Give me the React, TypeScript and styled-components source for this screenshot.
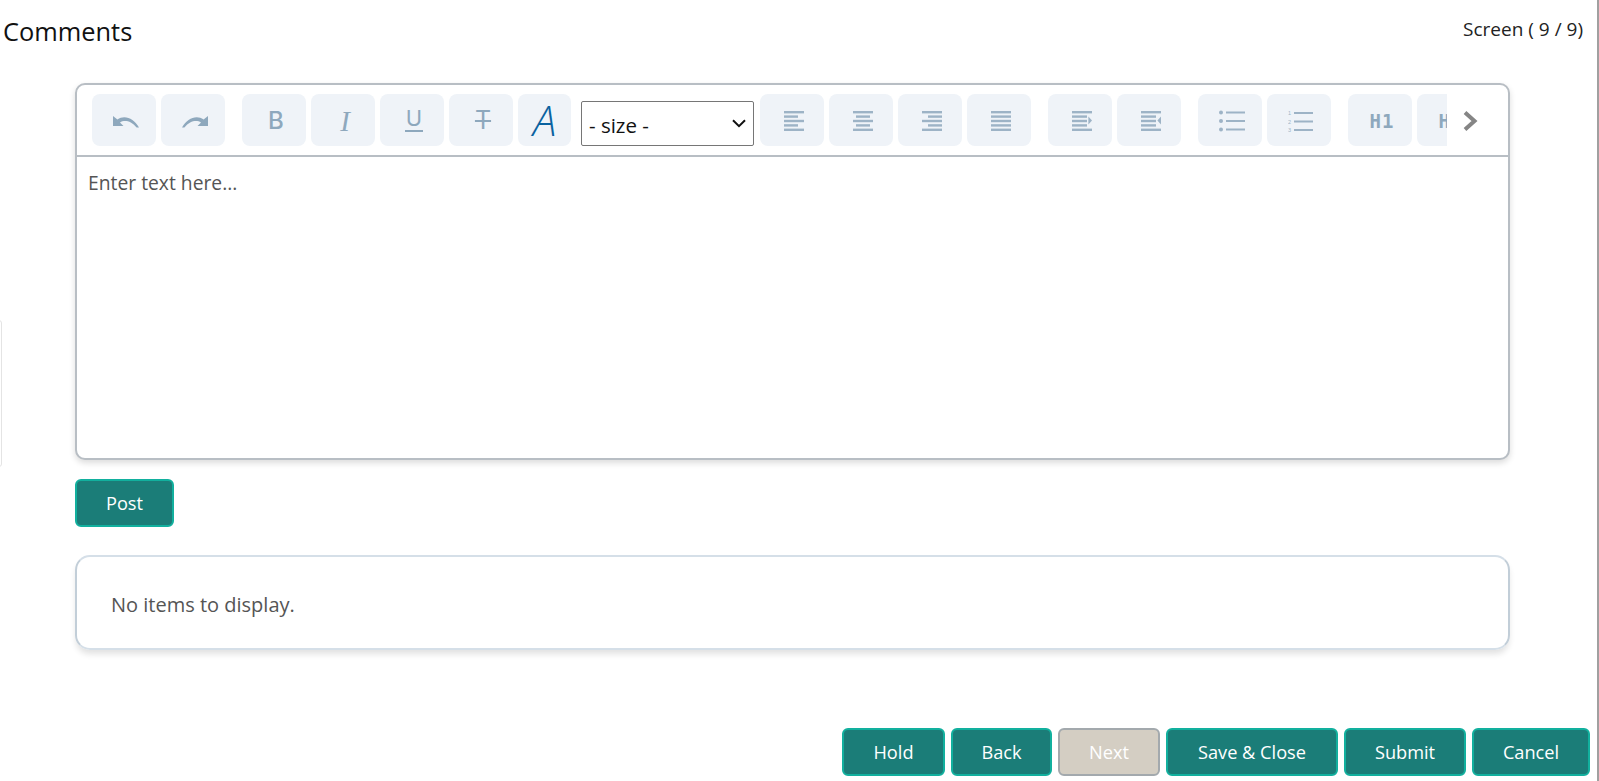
import React from 'react';
import styled, { createGlobalStyle } from 'styled-components';

const GlobalStyle = createGlobalStyle`
  html, body {
    margin: 0;
    padding: 0;
    background: #fff;
    overflow: hidden;
  }
  * { box-sizing: border-box; }
`;

const ICON = '#9db3c6';

const AlignIcon = ({ rows }: { rows: [number, number][] }) => (
  <svg width="20" height="20" viewBox="0 0 20 20">
    {rows.map(([x, w], i) => (
      <rect key={i} x={x} y={i * 4.4} width={w} height="2.4" fill={ICON} />
    ))}
  </svg>
);

const IndentIcon = ({ flip }: { flip?: boolean }) => (
  <svg width="20" height="20" viewBox="0 0 20 20">
    <rect x="0" y="0" width="20" height="2.4" fill={ICON} />
    <rect x="0" y="4.4" width="15" height="2.4" fill={ICON} />
    <rect x="0" y="8.8" width="15" height="2.4" fill={ICON} />
    <rect x="0" y="13.2" width="15" height="2.4" fill={ICON} />
    <rect x="0" y="17.6" width="20" height="2.4" fill={ICON} />
    <path d={flip ? 'M20 5.5v8l-3.6-4z' : 'M16.4 5.5v8l3.6-4z'} fill={ICON} />
  </svg>
);

const UndoIcon = ({ redo }: { redo?: boolean }) => (
  <svg width="26" height="13" viewBox="0 0 26 13" style={redo ? { transform: 'scaleX(-1)' } : undefined}>
    <path d="M0 1v10h10.5L7 7.4C11.5 4.8 18 5.6 23.6 12.6H26C21 3.5 11.5-.5 4.4 4.6z" fill="#8ea8bd" />
  </svg>
);

const BulletIcon = () => (
  <svg width="26" height="22" viewBox="0 0 26 22">
    <circle cx="2" cy="2.5" r="2" fill={ICON} />
    <circle cx="2" cy="11" r="2" fill={ICON} />
    <circle cx="2" cy="19.5" r="2" fill={ICON} />
    <rect x="7" y="1.5" width="19" height="2" fill={ICON} />
    <rect x="7" y="10" width="19" height="2" fill={ICON} />
    <rect x="7" y="18.5" width="19" height="2" fill={ICON} />
  </svg>
);

const NumberIcon = () => (
  <svg width="26" height="22" viewBox="0 0 26 22">
    {['1', '2', '3'].map((n, i) => (
      <g key={n}>
        <text x="0" y={5 + i * 8.5} fontSize="5.5" fontFamily="Liberation Sans, sans-serif" fill={ICON}>{n}</text>
        <rect x="6" y={2 + i * 8.5} width="19" height="2" fill={ICON} />
      </g>
    ))}
  </svg>
);

const Chevron = () => (
  <svg width="16" height="20" viewBox="0 0 16 20">
    <path d="M3 1.5L12.5 10 3 18.5" fill="none" stroke="#858585" strokeWidth="4" />
  </svg>
);

const selectArrow =
  "data:image/svg+xml,%3Csvg xmlns='http://www.w3.org/2000/svg' width='14' height='9' viewBox='0 0 14 9'%3E%3Cpath d='M1 1.2l6 6 6-6' fill='none' stroke='%23111' stroke-width='2'/%3E%3C/svg%3E";

const Page = styled.div`
  height: 781px;
  display: flex;
  flex-direction: column;
  border-right: 2px solid #a0a0a0;
  font-family: 'Open Sans', 'Noto Sans', sans-serif;
  position: relative;
`;

const EdgeTab = styled.div`
  position: absolute;
  left: -4px;
  top: 320px;
  width: 6px;
  height: 147px;
  border: 1px solid #e4e4e4;
  border-radius: 4px;
`;

const Header = styled.header`
  display: flex;
  justify-content: space-between;
  align-items: center;
  height: 61px;
  padding: 0 14px 0 3px;
`;

const Title = styled.h1`
  margin: 0;
  font-size: 25.4px;
  font-weight: 400;
  color: #111;
`;

const ScreenCount = styled.span`
  font-size: 19px;
  color: #222;
  margin-top: -3px;
`;

const Content = styled.main`
  display: flex;
  flex-direction: column;
  align-items: flex-start;
  padding: 22px 87px 0 75px;
`;

const Editor = styled.section`
  width: 100%;
  height: 377px;
  border: 2px solid #b8bec4;
  border-radius: 10px;
  box-shadow: 0 3px 6px rgba(0, 0, 0, 0.14);
  background: #fff;
`;

const ToolbarRow = styled.div`
  display: flex;
  align-items: center;
  height: 72px;
  border-bottom: 2px solid #b8bec4;
  padding: 0 0 1px 15px;
`;

const ToolScroller = styled.div`
  display: flex;
  align-items: center;
  gap: 17px;
  width: 1355px;
  padding: 5px 0;
  overflow: hidden;
`;

const ToolGroup = styled.div`
  display: flex;
  flex: none;
  gap: 5px;
  align-items: center;
`;

const ToolButton = styled.button<{ $width?: number; $flush?: boolean }>`
  flex: none;
  display: flex;
  align-items: center;
  justify-content: center;
  width: ${p => p.$width ?? 64}px;
  height: 52px;
  padding: ${p => (p.$flush ? '0' : '3px 0 0 4px')};
  border: 0;
  border-radius: 8px;
  background: #eff3f8;
  color: #8ea8bd;
  font-family: 'Open Sans', sans-serif;
  font-size: 24px;
`;

const Bold = styled.span`
  font-family: 'Inter', sans-serif;
  font-weight: 500;
  line-height: 28px;
`;

const Italic = styled.span`
  font-family: 'Liberation Serif', serif;
  font-style: italic;
  font-size: 29px;
  line-height: 30px;
`;

const Under = styled.span`
  font-family: 'Inter', sans-serif;
  font-size: 22px;
  line-height: 23px;
  border-bottom: 2px solid #8ea8bd;
  height: 25px;
  display: block;
  padding: 0 1px;
  margin-top: -3px;
`;

const Strike = styled.span`
  font-family: 'Inter', sans-serif;
  font-size: 25px;
  line-height: 28px;
  text-decoration: line-through;
  margin-top: -2px;
`;

const FontLetter = styled.span`
  font-family: 'Open Sans', sans-serif;
  font-style: italic;
  font-weight: 300;
  font-size: 42px;
  line-height: 52px;
  color: #0a62a0;
`;

const Heading = styled.span`
  font-family: 'DejaVu Sans Mono', monospace;
  font-weight: 700;
  font-size: 19px;
  letter-spacing: 1px;
  line-height: 24px;
`;

const SizeSelect = styled.select`
  flex: none;
  width: 173px;
  height: 45px;
  margin: 7px 1px 0 5px;
  padding: 3px 0 0 7px;
  border: 1px solid #767676;
  border-radius: 2px;
  appearance: none;
  background: #fff url("${selectArrow}") no-repeat right 7px center;
  color: #111;
  font-family: 'Open Sans', sans-serif;
  font-size: 20.5px;
`;

const ScrollArrow = styled.div`
  display: flex;
  margin: 2px 0 0 15px;
`;

const Placeholder = styled.div`
  padding: 13px 11px;
  font-size: 19.3px;
  line-height: 26px;
  color: #555;
`;

const ActionButton = styled.button<{ $width: number; $off?: boolean }>`
  flex: none;
  width: ${p => p.$width}px;
  height: 48px;
  padding: 0;
  border: 2px solid ${p => (p.$off ? '#a3a9ad' : '#12b09e')};
  border-radius: 6px;
  background: ${p => (p.$off ? '#d4cec3' : '#1b7d78')};
  color: #fff;
  font-family: 'Open Sans', sans-serif;
  font-size: 18.2px;
`;

const PostRow = styled.div`
  margin-top: 19px;
`;

const ItemsPanel = styled.section`
  width: 100%;
  height: 95px;
  margin-top: 28px;
  display: flex;
  align-items: center;
  padding: 4px 0 0 34px;
  border: 2px solid #d5dfe8;
  border-left-color: #c2ced8;
  border-right-color: #c2ced8;
  border-radius: 15px;
  box-shadow: 0 5px 6px -1px rgba(0, 0, 0, 0.12);
  font-size: 20px;
  color: #555;
`;

const Footer = styled.footer`
  display: flex;
  justify-content: flex-end;
  gap: 6px;
  margin-top: auto;
  padding: 0 7px 5px 0;
`;

const footerActions = [
  { label: 'Hold', width: 103 },
  { label: 'Back', width: 101 },
  { label: 'Next', width: 102, off: true },
  { label: 'Save & Close', width: 172 },
  { label: 'Submit', width: 122 },
  { label: 'Cancel', width: 118 },
];

export default function App() {
  return (
    <Page>
      <GlobalStyle />
      <EdgeTab />
      <Header>
        <Title>Comments</Title>
        <ScreenCount>Screen ( 9 / 9)</ScreenCount>
      </Header>
      <Content>
        <Editor>
          <ToolbarRow>
            <ToolScroller>
              <ToolGroup>
                <ToolButton><UndoIcon /></ToolButton>
                <ToolButton><UndoIcon redo /></ToolButton>
              </ToolGroup>
              <ToolGroup>
                <ToolButton><Bold>B</Bold></ToolButton>
                <ToolButton><Italic>I</Italic></ToolButton>
                <ToolButton><Under>U</Under></ToolButton>
                <ToolButton><Strike>T</Strike></ToolButton>
                <ToolButton $width={53} $flush><FontLetter>A</FontLetter></ToolButton>
                <SizeSelect defaultValue="">
                  <option value="">- size -</option>
                </SizeSelect>
                <ToolButton><AlignIcon rows={[[0, 20], [0, 14], [0, 20], [0, 14], [0, 20]]} /></ToolButton>
                <ToolButton><AlignIcon rows={[[0, 20], [3, 14], [0, 20], [3, 14], [0, 20]]} /></ToolButton>
                <ToolButton><AlignIcon rows={[[0, 20], [6, 14], [0, 20], [6, 14], [0, 20]]} /></ToolButton>
                <ToolButton><AlignIcon rows={[[0, 20], [0, 20], [0, 20], [0, 20], [0, 20]]} /></ToolButton>
              </ToolGroup>
              <ToolGroup>
                <ToolButton><IndentIcon /></ToolButton>
                <ToolButton><IndentIcon flip /></ToolButton>
              </ToolGroup>
              <ToolGroup>
                <ToolButton><BulletIcon /></ToolButton>
                <ToolButton><NumberIcon /></ToolButton>
              </ToolGroup>
              <ToolGroup>
                <ToolButton><Heading>H1</Heading></ToolButton>
                <ToolButton><Heading>H2</Heading></ToolButton>
              </ToolGroup>
            </ToolScroller>
            <ScrollArrow><Chevron /></ScrollArrow>
          </ToolbarRow>
          <Placeholder>Enter text here...</Placeholder>
        </Editor>
        <PostRow>
          <ActionButton $width={99}>Post</ActionButton>
        </PostRow>
        <ItemsPanel>No items to display.</ItemsPanel>
      </Content>
      <Footer>
        {footerActions.map(a => (
          <ActionButton key={a.label} $width={a.width} $off={a.off}>{a.label}</ActionButton>
        ))}
      </Footer>
    </Page>
  );
}
